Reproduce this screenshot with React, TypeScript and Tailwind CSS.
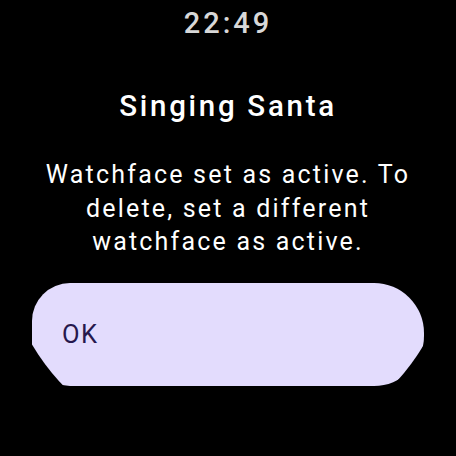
export default function App() {
  return (
    <div className="w-[456px] h-[456px] bg-black" style={{ fontFamily: 'Roboto, "Noto Sans", sans-serif' }}>
      <div className="w-[456px] h-[456px] bg-black [clip-path:circle(228px_at_228px_228px)] flex flex-col items-center">
        <div className="mt-[9px] h-[29px] text-[29px] leading-[29px] font-medium text-[#d8d8d8] tracking-[3px]">
          22:49
        </div>
        <div className="mt-[54px] h-[29px] text-[29.5px] leading-[29px] font-medium text-white tracking-[2.7px]">
          Singing Santa
        </div>
        <div className="mt-[37px] w-[390px] text-center text-[25px] leading-[33.5px] text-white tracking-[2.2px]">
          Watchface set as active. To delete, set a different watchface as active.
        </div>
        <div className="mt-[24.5px] w-[392px] h-[103px] rounded-tl-[38px] rounded-bl-[38px] rounded-tr-[50px] rounded-br-[50px] bg-[#e3dcfd] flex items-center pl-[30px] self-start ml-[32px]">
          <span className="text-[25.5px] leading-[25px] text-[#26184d] tracking-[1.5px]">OK</span>
        </div>
      </div>
    </div>
  );
}
